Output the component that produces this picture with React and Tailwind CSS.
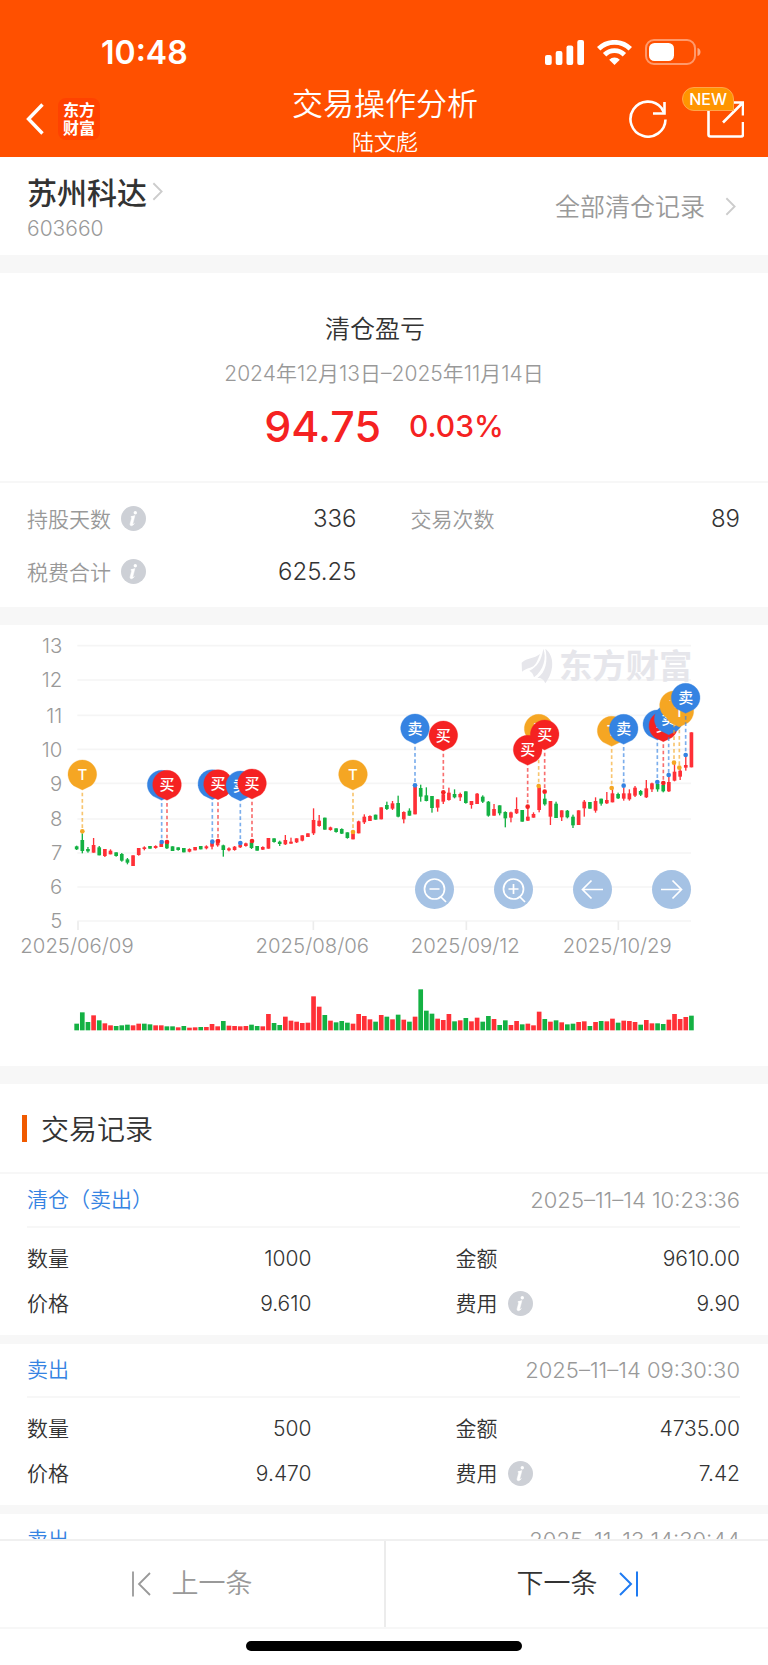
import React from 'react';

const UI_FONT = "font-['Inter','Noto_Sans_CJK_SC',sans-serif]";
const CJK_FONT = "font-['Noto_Sans_CJK_SC',sans-serif]";

const COLORS = {
  r: '#ff3037',
  g: '#14b143',
  sell: '#3583e2',
  buy: '#f52222',
  t: '#f5a623',
};

// [direction, body top, body bottom, wick top, wick bottom]
const CANDLES = [
  ['g', 679, 688, 677, 690], ['g', 660, 693, 640, 700], ['g', 687, 694, 681, 698], ['r', 675, 698, 654, 698],
  ['g', 682, 706, 678, 706], ['r', 687, 708, 687, 711], ['r', 692, 703, 688, 703], ['g', 697, 708, 697, 710],
  ['g', 702, 722, 699, 725], ['g', 718, 728, 714, 733], ['r', 706, 738, 706, 738], ['r', 684, 705, 684, 707],
  ['r', 682, 687, 679, 691], ['g', 678, 686, 678, 686], ['r', 678, 684, 676, 686], ['r', 670, 681, 670, 681],
  ['g', 668, 685, 668, 687], ['g', 679, 693, 679, 693], ['g', 682, 690, 682, 692], ['g', 684, 697, 684, 697],
  ['r', 687, 695, 685, 697], ['r', 681, 691, 681, 691], ['g', 678, 688, 678, 688], ['r', 679, 685, 676, 688],
  ['r', 668, 680, 664, 688], ['r', 660, 676, 660, 680], ['g', 676, 690, 674, 710], ['r', 685, 691, 682, 694],
  ['r', 680, 690, 678, 692], ['r', 674, 682, 670, 684], ['r', 670, 678, 668, 680], ['g', 667, 684, 664, 687],
  ['g', 678, 692, 678, 692], ['r', 681, 689, 679, 690], ['r', 654, 686, 654, 686], ['g', 655, 666, 655, 668],
  ['g', 665, 672, 662, 678], ['r', 660, 673, 645, 675], ['r', 665, 671, 653, 671], ['r', 655, 667, 655, 669],
  ['r', 646, 662, 646, 664], ['r', 640, 651, 640, 651], ['r', 600, 640, 565, 645], ['r', 602, 618, 585, 620],
  ['g', 593, 629, 593, 629], ['r', 622, 630, 620, 632], ['g', 625, 636, 625, 638], ['g', 627, 641, 625, 642],
  ['g', 637, 654, 637, 656], ['r', 640, 658, 636, 658], ['r', 604, 640, 602, 640], ['r', 590, 607, 583, 612],
  ['r', 588, 603, 586, 603], ['g', 584, 599, 584, 599], ['r', 562, 598, 562, 598], ['g', 555, 567, 545, 570],
  ['r', 550, 566, 543, 570], ['g', 549, 590, 527, 592], ['r', 576, 598, 574, 610], ['g', 572, 587, 565, 587],
  ['r', 500, 583, 500, 583], ['g', 504, 530, 494, 545], ['g', 526, 543, 502, 544], ['g', 528, 564, 528, 578],
  ['r', 538, 563, 538, 575], ['r', 523, 545, 515, 552], ['r', 518, 540, 503, 542], ['g', 522, 532, 508, 535],
  ['r', 522, 532, 518, 543], ['g', 514, 549, 514, 551], ['r', 543, 555, 543, 566], ['r', 521, 552, 519, 552],
  ['g', 530, 545, 526, 549], ['g', 545, 587, 543, 590], ['r', 567, 587, 552, 587], ['g', 556, 580, 556, 586],
  ['g', 576, 595, 574, 622], ['r', 577, 593, 575, 607], ['r', 567, 580, 532, 582], ['g', 570, 605, 570, 605],
  ['r', 590, 602, 560, 603], ['r', 582, 593, 577, 593], ['r', 502, 570, 500, 577], ['g', 536, 553, 522, 557],
  ['r', 543, 590, 543, 615], ['g', 551, 594, 545, 594], ['r', 571, 592, 571, 603], ['g', 572, 592, 570, 595],
  ['g', 590, 616, 584, 624], ['r', 571, 615, 571, 615], ['r', 545, 565, 540, 590], ['g', 546, 566, 546, 566],
  ['r', 543, 572, 532, 578], ['g', 536, 551, 536, 557], ['r', 540, 550, 516, 552], ['r', 520, 547, 505, 547],
  ['g', 522, 535, 518, 537], ['r', 520, 536, 503, 542], ['r', 520, 538, 508, 542], ['r', 503, 527, 498, 531],
  ['g', 513, 524, 510, 528], ['r', 505, 532, 480, 534], ['r', 490, 508, 488, 516], ['g', 492, 508, 488, 515],
  ['g', 495, 514, 493, 517], ['r', 486, 514, 470, 516], ['r', 455, 482, 432, 484], ['r', 452, 470, 445, 480],
  ['r', 435, 443, 408, 452], ['r', 337, 442, 337, 442],
];

const VOLUMES = `
g20 g54 g25 r45 g30 r21 r15 g13 g15 g17 r15 r20 g20 g18 r15 r15 g12 g12 r9 g13 r8 r9
g10 r10 r19 r12 g28 r14 r13 r12 r13 g17 g13 r12 r49 g22 g16 r41 r29 r26 r22 r23 r102 r71
g46 r29 g24 g28 g23 r20 r49 r43 r33 g26 r46 g41 r33 g47 r32 g26 r41 g123 g59 g50 r35 r31
r49 g27 r30 g37 r27 r38 g26 g43 r34 g16 g30 r16 r28 g18 r20 r15 r56 g34 r26 g30 r24 g18
g20 r25 r27 g13 r25 g28 r27 r35 g23 r29 r28 r25 g17 r31 r21 g21 g19 r32 r49 r34 r40 g44
`.trim().split(/\s+/);

// x, pin centre, dot position
const PINS = [
  { type: 't', x: 247, y: 463, dot: 634 },
  { type: 'sell', x: 485, y: 494, dot: 666 },
  { type: 'buy', x: 501, y: 494, dot: 666 },
  { type: 'sell', x: 637, y: 492, dot: 665 },
  { type: 'buy', x: 654, y: 492, dot: 663 },
  { type: 'sell', x: 721, y: 496, dot: 669 },
  { type: 'buy', x: 756, y: 490, dot: 663 },
  { type: 't', x: 1059, y: 463, dot: 636 },
  { type: 'sell', x: 1245, y: 325, dot: 496 },
  { type: 'buy', x: 1330, y: 346, dot: 517 },
  { type: 't', x: 1616, y: 326, dot: 498 },
  { type: 'buy', x: 1583, y: 389, dot: 560 },
  { type: 'buy', x: 1634, y: 343, dot: 515 },
  { type: 't', x: 1835, y: 332, dot: 504 },
  { type: 'sell', x: 1871, y: 326, dot: 497 },
  { type: 'sell', x: 1972, y: 313, dot: 486 },
  { type: 'buy', x: 1990, y: 318, dot: 489 },
  { type: 'sell', x: 2006, y: 297, dot: 465 },
  { type: 't', x: 2022, y: 256, dot: 428 },
  { type: 't', x: 2038, y: 274, dot: 443 },
  { type: 'sell', x: 2057, y: 233, dot: 405 },
];

const PIN_LABELS = { t: 'T', buy: '买', sell: '卖' };

const GRID = [
  [13, 77], [12, 180], [11, 286], [10, 388], [9, 490], [8, 597], [7, 699], [6, 801], [5, 903],
];

const DATES = [
  ['2025/06/09', 234], ['2025/08/06', 940], ['2025/09/12', 1399], ['2025/10/29', 1855],
];

const RECORDS = [
  { title: '清仓（卖出）', time: '2025–11–14 10:23:36', count: '1000', amount: '9610.00', price: '9.610', fee: '9.90' },
  { title: '卖出', time: '2025–11–14 09:30:30', count: '500', amount: '4735.00', price: '9.470', fee: '7.42' },
  { title: '卖出', time: '2025–11–13 14:30:44' },
];

const candleX = (i) => 230 + i * 16.92;

const InfoButton = ({ label }) => (
  <button type="button" aria-label={label} className="shrink-0">
    <svg className="size-[25px]" viewBox="0 0 25 25">
      <circle cx="12.5" cy="12.5" r="12.5" fill="#cdd0d6" />
      <circle cx="14.3" cy="6.8" r="1.7" fill="#fff" />
      <path d="M10 10.6c1.400-.2 2.600-.5 3.900-1l-2.100 8.100c-.2.800.2.900 1.600-.2-1.200 1.700-2.200 2.300-3.200 2.200-1.100-.1-1.300-1-1-2.200l1.400-5.300c.2-.8 0-1-.7-1z" fill="#fff" stroke="#fff" strokeWidth=".5" />
    </svg>
  </button>
);

const Chevron = ({ className }) => (
  <svg className={className} viewBox="0 0 12 20" fill="none" stroke="currentColor" strokeWidth="2">
    <path d="M1.500 1l9 9-9 9" />
  </svg>
);

const Header = () => (
  <header className="bg-[#ff5000] pt-[33px] text-white">
    <div className="flex h-12 items-start justify-between pr-[67px] pl-[101px]">
      <span className="text-[32px] leading-10 font-semibold">10:48</span>
      <div className="flex h-[38px] items-center gap-[13px]">
        <svg className="h-[25px] w-[39px]" viewBox="0 0 39 25" fill="#fff">
          <rect x="0" y="15" width="6.700" height="10" rx="2" />
          <rect x="10.700" y="11" width="6.700" height="14" rx="2" />
          <rect x="21.500" y="5.500" width="6.700" height="19.500" rx="2" />
          <rect x="32.300" y="0" width="6.700" height="25" rx="2" />
        </svg>
        <svg className="h-[25px] w-[35px]" viewBox="0 0 35 25" fill="none" stroke="#fff" strokeWidth="4.800">
          <path d="M1.700 8.800a22.500 22.500 0 0 1 31.600 0" />
          <path d="M7.600 14.800a14 14 0 0 1 19.800 0" />
          <path d="M17.500 25l-5.300-5.300a7.500 7.500 0 0 1 10.600 0z" fill="#fff" stroke="none" />
        </svg>
        <svg className="h-[26px] w-14" viewBox="0 0 56 26">
          <rect x="1" y="1" width="49" height="24" rx="8" fill="none" stroke="#fff" strokeOpacity=".42" strokeWidth="2" />
          <rect x="4" y="4" width="25" height="18" rx="5.500" fill="#fff" />
          <path d="M52.500 9c4 1 4 7 0 8z" fill="#fff" fillOpacity=".5" />
        </svg>
      </div>
    </div>
    <div className="grid grid-cols-[1fr_auto_1fr] items-center pr-6 pl-[26px]">
      <div className="flex items-center gap-[14px]">
        <button type="button" aria-label="返回">
          <svg className="h-8 w-[18px]" viewBox="0 0 18 32" fill="none" stroke="#fff" strokeWidth="3.400">
            <path d="M16.500 1.500L2.500 16l14 14.500" />
          </svg>
        </button>
        <a href="#home" className="flex size-[42px] flex-col items-center justify-center rounded-lg bg-[#ff4200] text-base leading-[18px] font-bold">
          <span>东方</span>
          <span>财富</span>
        </a>
      </div>
      <div className={`text-center font-[350] ${CJK_FONT}`}>
        <h1 className="text-[31px] leading-[42px]">交易操作分析</h1>
        <p className="text-[22px] leading-[34px]">陆文彪</p>
      </div>
      <div className="flex items-center justify-end gap-10">
        <button type="button" aria-label="刷新">
          <svg className="size-[38px]" viewBox="0 0 38 38" fill="none" stroke="#fff" strokeWidth="2.600">
            <path d="M36.500 19.500A17.500 17.500 0 1 1 32.500 8L35 12.500" />
            <path d="M35.500 2v11.500H24" />
          </svg>
        </button>
        <button type="button" aria-label="分享" className="relative">
          <svg className="size-[37px]" viewBox="0 0 37 37" fill="none" stroke="#fff" strokeWidth="2.600">
            <path d="M1.500 6v27.500a2 2 0 0 0 2 2H34a2 2 0 0 0 2-2V21" />
            <path d="M16 21.500L35.500 2M26 1.500h10v13" />
          </svg>
          <span className="absolute -top-[14px] right-[10px] flex h-6 items-center rounded-full rounded-br-none border border-[#ffa54a] bg-[#ff9500] px-[6px] text-base font-medium">
            NEW
          </span>
        </button>
      </div>
    </div>
  </header>
);

const StockBar = () => (
  <section className="flex h-[98px] items-center justify-between pr-8 pl-[27px]">
    <a href="#stock" className="block pt-1">
      <span className={`flex items-center gap-[5px] text-[30px] leading-[42px] font-medium text-[#333] ${CJK_FONT}`}>
        苏州科达
        <Chevron className="h-[19px] w-[11px] text-[#ccc]" />
      </span>
      <span className="block text-[21px] leading-[34px] font-light text-[#999]">603660</span>
    </a>
    <a href="#all" className={`flex items-center gap-5 text-[25px] font-[350] text-[#999] ${CJK_FONT}`}>
      全部清仓记录
      <Chevron className="h-[19px] w-[11px] text-[#ccc]" />
    </a>
  </section>
);

const Summary = () => (
  <section>
    <div className="flex h-[210px] flex-col items-center border-b-2 border-[#f7f7f7] pt-9">
      <h2 className={`pr-[18px] text-[25px] leading-9 font-[350] text-[#333] ${CJK_FONT}`}>清仓盈亏</h2>
      <p className="mt-[14px] text-[21px] leading-[30px] font-[350] text-[#999]">2024年12月13日–2025年11月14日</p>
      <p className="mt-[10px] flex items-center gap-7 leading-[54px] text-[#f52222]">
        <span className="text-[43px] font-medium">94.75</span>
        <span className="text-[30px] font-medium">0.03%</span>
      </p>
    </div>
    <dl className="grid grid-cols-2 gap-x-[54px] pt-[9px] pr-7 pb-[9px] pl-[27px] text-[21px] leading-[53px] font-[350] text-[#999]">
      <div className="flex items-center justify-between">
        <dt className={`flex items-center gap-[10px] ${CJK_FONT}`}>持股天数<InfoButton label="持股天数说明" /></dt>
        <dd className="text-2xl leading-[53px] text-[#333]">336</dd>
      </div>
      <div className="flex items-center justify-between">
        <dt className={CJK_FONT}>交易次数</dt>
        <dd className="text-2xl leading-[53px] text-[#333]">89</dd>
      </div>
      <div className="flex items-center justify-between">
        <dt className={`flex items-center gap-[10px] ${CJK_FONT}`}>税费合计<InfoButton label="税费合计说明" /></dt>
        <dd className="text-2xl leading-[53px] text-[#333]">625.25</dd>
      </div>
    </dl>
  </section>
);

const Pin = ({ type, x, y, dot }) => (
  <g>
    <line x1={x} x2={x} y1={y + 55} y2={dot - 6} stroke={COLORS[type]} strokeOpacity=".65" strokeWidth="5" strokeDasharray="11 8" />
    <circle cx={x} cy={dot} r="7" fill={COLORS[type]} />
    <g transform={`translate(${x} ${y})`}>
      <path d="M0 47L-26 34.200A43 43 0 1 1 26 34.200Z" fill={COLORS[type]} stroke={COLORS[type]} strokeLinejoin="round" />
      <text y="16" textAnchor="middle" fontSize="45" fontWeight="500" fill="#fff">{PIN_LABELS[type]}</text>
    </g>
  </g>
);

const ChartButton = ({ label, children }) => (
  <button type="button" aria-label={label} className="size-[39px] rounded-full bg-[#a5c2e4]">
    <svg viewBox="0 0 39 39" fill="none" stroke="#fff" strokeWidth="1.700">{children}</svg>
  </button>
);

const Chart = () => (
  <section className="relative">
    <svg className="block h-auto w-full" viewBox="0 15 2304 1323">
      <g stroke="#f5f5f5" strokeWidth="5">
        {GRID.map(([value, y]) => <line key={value} x1="232" x2="2073" y1={y} y2={y} />)}
      </g>
      <g stroke="#ececec" strokeWidth="5">
        {DATES.map(([date, x]) => <line key={date} x1={x} x2={x} y1="904" y2="930" />)}
      </g>
      <g fill="#999" fontSize="61" fontWeight="300">
        {GRID.map(([value, y]) => <text key={value} x="187" y={y + 22} textAnchor="end">{value}</text>)}
        {DATES.map(([date, x]) => <text key={date} x={x - 3} y="998" textAnchor="middle">{date}</text>)}
      </g>
      <g fill="#e6e6eb">
        <path d="M1565 128C1582 112 1602 117 1620 102C1612 124 1606 140 1590 143C1580 145 1572 150 1566 155Z" />
        <path d="M1588 152C1612 140 1624 122 1630 86C1640 112 1632 150 1602 172C1600 162 1595 156 1588 152Z" />
        <path d="M1636 86C1664 108 1664 152 1636 190C1632 180 1626 174 1612 174C1638 156 1644 122 1636 86Z" />
        <text x="1677" y="175" fontSize="100" fontWeight="700">东方财富</text>
      </g>
      {CANDLES.map(([dir, top, bottom, high, low], i) => (
        <g key={i} fill={COLORS[dir]}>
          <rect x={candleX(i) - 5.5} y={top} width="11" height={bottom - top} />
          <rect x={candleX(i) - 2} y={high} width="4" height={low - high} />
        </g>
      ))}
      {VOLUMES.map((bar, i) => {
        const height = Number(bar.slice(1));
        return <rect key={i} x={candleX(i) - 7} y={1231 - height} width="14" height={height} fill={COLORS[bar[0]]} />;
      })}
      {PINS.map((pin) => <Pin key={pin.x} {...pin} />)}
    </svg>
    <div className="absolute top-[245px] right-[10%] flex gap-10">
      <ChartButton label="缩小">
        <circle cx="19.500" cy="19" r="10" />
        <path d="M14.500 19h10M26 27l5 5" />
      </ChartButton>
      <ChartButton label="放大">
        <circle cx="19.500" cy="19" r="10" />
        <path d="M14.500 19h10M19.500 14v10M26 27l5 5" />
      </ChartButton>
      <ChartButton label="向左">
        <path d="M30 19.500H10M18.500 10.500l-9 9 9 9" />
      </ChartButton>
      <ChartButton label="向右">
        <path d="M9 19.500h20M20.500 10.500l9 9-9 9" />
      </ChartButton>
    </div>
  </section>
);

const RecordRow = ({ label, value, info }) => (
  <div className="flex items-center justify-between leading-[45px]">
    <dt className="flex items-center gap-[10px]">{label}{info && <InfoButton label="费用说明" />}</dt>
    <dd>{value}</dd>
  </div>
);

const Record = ({ title, time, count, amount, price, fee }) => (
  <li className="border-b-[9px] border-[#f7f7f7] pr-7 pl-[27px] text-[21px] font-[350] text-[#333]">
    <div className="flex items-center justify-between border-b-2 border-[#f7f7f7] leading-[52px]">
      <h3 className="text-[#3583e2]">{title}</h3>
      <time className="text-[22px] font-light text-[#999]">{time}</time>
    </div>
    {count && (
      <dl className="grid grid-cols-2 gap-x-36 pt-2 pb-[9px]">
        <RecordRow label="数量" value={count} />
        <RecordRow label="金额" value={amount} />
        <RecordRow label="价格" value={price} />
        <RecordRow label="费用" value={fee} info />
      </dl>
    )}
  </li>
);

const Records = () => (
  <section>
    <div className="flex h-[90px] items-center gap-[14px] border-b-2 border-[#f7f7f7] pl-[22px]">
      <span className="h-[27px] w-[5px] bg-[#f05a00]" />
      <h2 className={`text-[28px] font-[350] text-[#333] ${CJK_FONT}`}>交易记录</h2>
    </div>
    <ul>
      {RECORDS.map((record) => <Record key={record.time} {...record} />)}
    </ul>
  </section>
);

const Footer = () => (
  <footer className="border-t-2 border-[#f0f0f0] bg-white">
    <nav className="grid h-[88px] grid-cols-2 border-b-2 border-[#f7f7f7] text-[27px] font-[350]">
      <button type="button" className="flex items-center justify-center gap-[21px] text-[#999]">
        <svg className="h-[26px] w-[19px]" viewBox="0 0 19 26" fill="none" stroke="currentColor" strokeWidth="1.800">
          <path d="M1 .5v25M18 2L7 13l11 11" />
        </svg>
        上一条
      </button>
      <button type="button" className="flex items-center justify-center gap-[21px] border-l-2 border-[#ececec] text-[#333]">
        下一条
        <svg className="h-[26px] w-[19px]" viewBox="0 0 19 26" fill="none" stroke="#1f7bf2" strokeWidth="2">
          <path d="M18 .5v25M1 2l11 11L1 24" />
        </svg>
      </button>
    </nav>
    <div className="flex h-9 justify-center pt-3">
      <div className="h-[10px] w-[36%] rounded-full bg-black" />
    </div>
  </footer>
);

const Gap = () => <div className="h-[18px] bg-[#f7f7f7]" />;

const App = () => (
  <div className={`flex h-screen flex-col bg-white ${UI_FONT}`}>
    <Header />
    <main className="min-h-0 flex-1 overflow-hidden">
      <StockBar />
      <Gap />
      <Summary />
      <Gap />
      <Chart />
      <Gap />
      <Records />
    </main>
    <Footer />
  </div>
);

export default App;
